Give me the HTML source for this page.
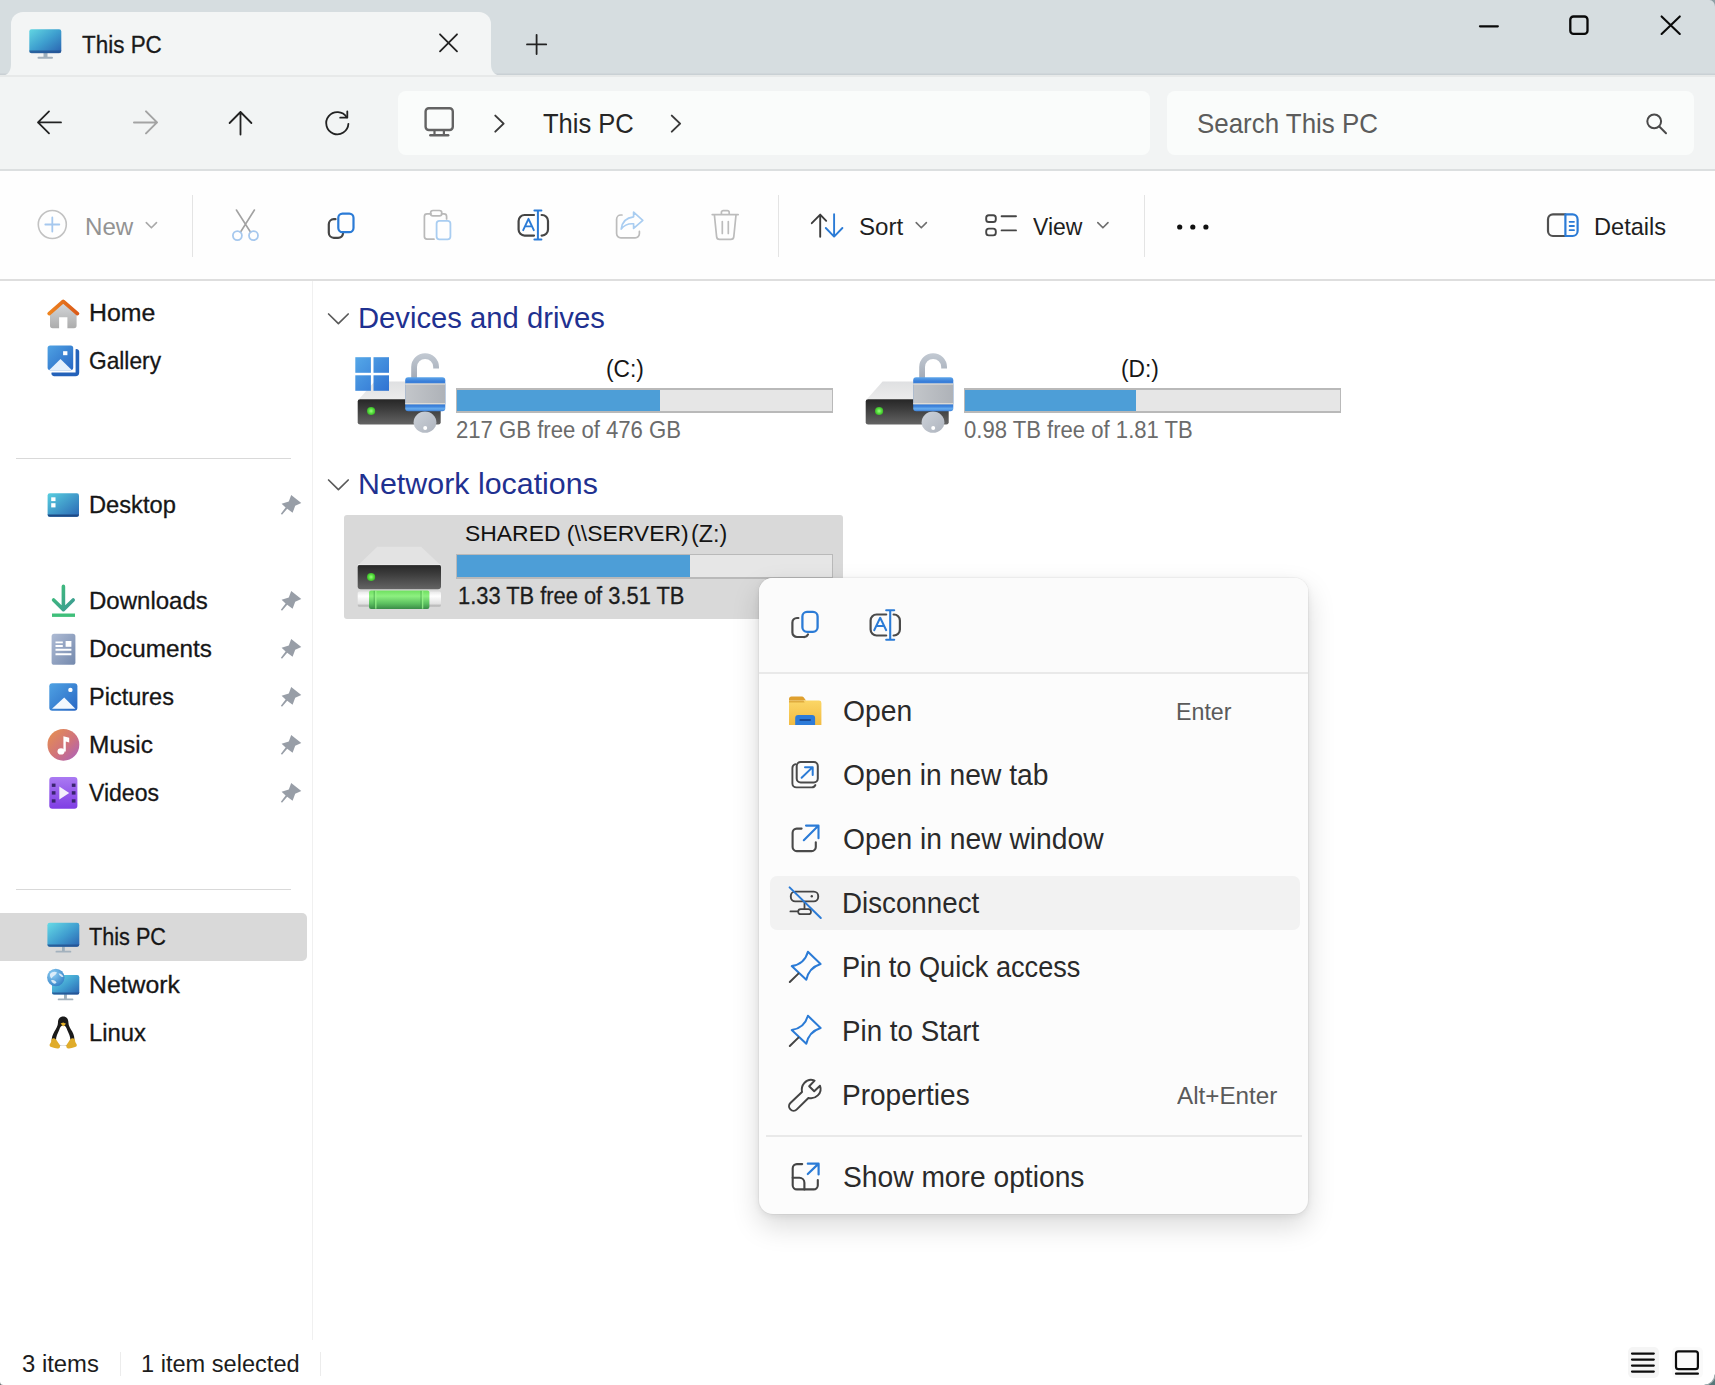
<!DOCTYPE html>
<html lang="en">
<head>
<meta charset="utf-8">
<title>This PC</title>
<style>
html,body{margin:0;padding:0}
body{width:1715px;height:1385px;overflow:hidden;position:relative;background:#fff;font-family:"Liberation Sans",sans-serif;}
.a{position:absolute}
.t{position:absolute;white-space:nowrap;line-height:1;transform-origin:0 50%;display:block}
svg{position:absolute;overflow:visible}
#titlebar{left:0;top:0;width:1715px;height:75px;background:#d6dde0;box-shadow:inset 0 -1.5px 0 #c9d0d4}
#tab{left:11px;top:12px;width:480px;height:64px;background:#f3f5f5;border-radius:12px 12px 0 0}
#navbar{left:0;top:75px;width:1715px;height:95px;background:#f2f4f4}
#addr{left:398px;top:91px;width:752px;height:64px;background:#fafcfb;border-radius:8px}
#search{left:1167px;top:91px;width:527px;height:64px;background:#fafcfb;border-radius:8px}
#navline{left:0;top:169px;width:1715px;height:2px;background:#dcdfe0}
#toolbar{left:0;top:171px;width:1715px;height:109px;background:#fefefe}
#toolline{left:0;top:279px;width:1715px;height:2px;background:#dedede}
.vsep{width:1px;background:#e4e4e4;top:195px;height:62px}
#sideline{left:312px;top:281px;width:1.4px;height:1059px;background:#f0f0f0}
.hsep{left:16px;width:275px;height:1px;background:#d9d9d9}
#selnav{left:0;top:913px;width:307px;height:48px;background:#d9d9d9;border-radius:0 5px 5px 0}
#seltile{left:344px;top:515px;width:499px;height:104px;background:#d9d9d9;border-radius:3px}
.bar{box-sizing:border-box;height:24.8px;width:377.6px;padding:1.6px;background:#b9b9b9}
.bar b{display:block;height:100%;background:#e6e6e6}
.bar i{display:block;height:100%;background:#4d9ed7}
#menu{left:759px;top:577.5px;width:549px;height:636px;background:#fcfcfc;border-radius:14px;box-shadow:0 12px 28px rgba(0,0,0,.15),0 2px 7px rgba(0,0,0,.07),0 0 0 1px rgba(0,0,0,.035)}
#menutop{left:759px;top:577.5px;width:549px;height:94px;background:#fbfbfb;border-radius:14px 14px 0 0;border-bottom:2px solid #e9e9e9}
#mhover{left:770px;top:875.5px;width:530px;height:54.5px;background:#f2f2f2;border-radius:7px}
#msep{left:766px;top:1135.3px;width:536px;height:1.6px;background:#e9e9e9}
.sbtn{top:1347px;width:31px;height:31px;background:#f5f5f5;border-radius:5px}
</style>
</head>
<body>
<!-- ===== title bar ===== -->
<div class="a" id="titlebar"></div>
<div class="a" id="tab"></div>
<svg style="left:0;top:64px" width="510" height="12" viewBox="0 0 510 12"><path d="M0 12H11V0Q11 12 0 12Z M491 0Q491 12 503 12H491Z" fill="#f3f5f5"/></svg>
<span class="t" style="left:82.20px;top:32.54px;font-size:24.6px;color:#1a1a1a;-webkit-text-stroke:.3px;transform:scaleX(0.9125)">This PC</span>
<!-- ===== nav bar ===== -->
<div class="a" id="navbar"></div>
<div class="a" id="addr"></div>
<div class="a" id="search"></div>
<div class="a" id="navline"></div>
<div class="a" style="left:0;top:75px;width:1715px;height:1.5px;background:rgba(0,0,0,.045)"></div>
<span class="t" style="left:543.20px;top:109.66px;font-size:28.1px;color:#262626;transform:scaleX(0.9090)">This PC</span>
<span class="t" style="left:1196.98px;top:109.57px;font-size:28.1px;color:#5c5c5c;transform:scaleX(0.9226)">Search This PC</span>
<!-- ===== title/nav icons ===== -->
<svg style="left:0;top:0" width="1715" height="175" viewBox="0 0 1715 175">
<defs>
<linearGradient id="gpc" x1="0" y1="0" x2="1" y2="1"><stop offset="0" stop-color="#62d6e2"/><stop offset=".5" stop-color="#3e9fcf"/><stop offset="1" stop-color="#2a62b0"/></linearGradient>
</defs>
<!-- tab pc icon -->
<rect x="43.5" y="52" width="4" height="5.5" fill="#9fb0bd"/>
<rect x="37.5" y="56.8" width="15.5" height="2" rx="1" fill="#a3b1bd"/>
<rect x="29.3" y="29.3" width="32" height="23.6" rx="2.2" fill="url(#gpc)"/>
<path d="M29.3 50.6h32v.4a2.2 2.2 0 0 1-2.2 2.2H31.5a2.2 2.2 0 0 1-2.2-2.2z" fill="#23508f" opacity=".75"/>
<g fill="none" stroke="#222" stroke-width="1.8" stroke-linecap="round" stroke-linejoin="round">
<!-- tab close, plus -->
<path d="M440 34.3 457 51.3M457 34.3 440 51.3"/>
<path d="M536.6 34.8V54M527 44.4H546.2"/>
<!-- window controls -->
<g stroke="#0a0a0a" stroke-width="2.3"><path d="M1480 26.300H1497.800"/>
<rect x="1570.300" y="16.500" width="17.200" height="17.400" rx="3.200"/>
<path d="M1661.600 16.400 1679.800 34 M1679.800 16.400 1661.600 34" stroke-width="2.100"/></g>
<!-- back / up -->
<path d="M38 122.4H61M49 111.4 38 122.4 49 133.4"/>
<path d="M240.5 112V134.6M229.6 123 240.5 112 251.4 123"/>
<!-- refresh -->
<path d="M348.4 123.8A11.1 11.1 0 1 1 346.7 117.3"/>
<path d="M340.2 117.7H347.3V111.4"/>
</g>
<!-- forward disabled -->
<path d="M134 122.4H157M146 111.4 157 122.4 146 133.4" fill="none" stroke="#a3a3a3" stroke-width="2" stroke-linecap="round" stroke-linejoin="round"/>
<!-- address monitor -->
<g fill="none" stroke="#636363" stroke-width="2.4" stroke-linejoin="round">
<rect x="425.6" y="108.2" width="27.2" height="21.8" rx="3.2"/>
<path d="M434.5 130.5V134.5M443.9 130.5V134.5" stroke-width="2.2"/>
<path d="M430.3 135.3H448.2" stroke-linecap="round"/>
</g>
<!-- chevrons -->
<g fill="none" stroke="#3a3a3a" stroke-width="2" stroke-linecap="round" stroke-linejoin="round">
<path d="M495.3 115.6 503.6 123.6 495.3 131.6"/>
<path d="M671.8 115.6 680.1 123.6 671.8 131.6"/>
</g>
<!-- search -->
<g fill="none" stroke="#4a4a4a" stroke-width="2" stroke-linecap="round">
<circle cx="1654.2" cy="121.3" r="6.9"/>
<path d="M1659.3 126.5 1666 133.2"/>
</g>
</svg>
<!-- ===== toolbar ===== -->
<div class="a" id="toolbar"></div>
<div class="a" id="toolline"></div>
<div class="a vsep" style="left:192px"></div>
<div class="a vsep" style="left:778px"></div>
<div class="a vsep" style="left:1144px"></div>
<span class="t" style="left:84.92px;top:214.64px;font-size:24.4px;color:#939393;transform:scaleX(0.9890)">New</span>
<span class="t" style="left:858.97px;top:214.64px;font-size:24.4px;color:#1f1f1f;transform:scaleX(0.9889)">Sort</span>
<span class="t" style="left:1033.00px;top:214.64px;font-size:24.4px;color:#1f1f1f;transform:scaleX(0.9421)">View</span>
<span class="t" style="left:1594.29px;top:214.64px;font-size:24.4px;color:#1f1f1f;transform:scaleX(0.9675)">Details</span>
<!-- ===== toolbar icons ===== -->
<svg style="left:0;top:0" width="1715" height="285" viewBox="0 0 1715 285">
<g fill="none" stroke-linecap="round" stroke-linejoin="round">
<!-- new -->
<circle cx="52.3" cy="224.5" r="14" stroke="#c2c2c2" stroke-width="1.6"/>
<path d="M52.3 217.5V231.5M45.3 224.5H59.3" stroke="#a6c8ee" stroke-width="1.8"/>
<path d="M146.3 222.6 151.4 227.8 156.5 222.6" stroke="#a9a9a9" stroke-width="1.6"/>
<!-- cut -->
<path d="M236.4 210 250.6 232.3M254.4 210 240.4 232.3" stroke="#a2a2a2" stroke-width="1.6"/>
<circle cx="237.4" cy="235.6" r="4.5" stroke="#a6c8ee" stroke-width="1.8"/>
<circle cx="253.5" cy="235.6" r="4.5" stroke="#a6c8ee" stroke-width="1.8"/>
<!-- copy -->
<path d="M335.5 219.2H333.8A5 5 0 0 0 328.8 224.2V232.8A5 5 0 0 0 333.8 237.8H338A5 5 0 0 0 343 233.6" stroke="#454545" stroke-width="2.2"/>
<rect x="338.3" y="213.6" width="15.2" height="18.6" rx="4.2" stroke="#2b7bd6" stroke-width="2.2"/>
<!-- paste -->
<path d="M431 213.8H427A2.6 2.6 0 0 0 424.4 216.4V236.6A2.6 2.6 0 0 0 427 239.2H434" stroke="#b9b9b9" stroke-width="1.7"/>
<path d="M441.5 213.8H444A2.6 2.6 0 0 1 446.6 216.4V219" stroke="#b9b9b9" stroke-width="1.7"/>
<rect x="430.6" y="210.5" width="11.2" height="5.4" rx="2.4" stroke="#b9b9b9" stroke-width="1.7"/>
<rect x="436.6" y="220.8" width="13.8" height="18.6" rx="2.8" stroke="#a9cdf1" stroke-width="1.8"/>
<!-- rename -->
<path d="M534 215H524.6A6 6 0 0 0 518.6 221V229.6A6 6 0 0 0 524.6 235.6H534M541.6 215H542A6 6 0 0 1 548 221V229.6A6 6 0 0 1 542 235.6H541.6" stroke="#454545" stroke-width="2.2"/>
<path d="M537.9 210.6V239.4M534.4 210.4H541.4M534.4 239.6H541.4" stroke="#2b7bd6" stroke-width="2"/>
<path d="M523.2 230.2 528.5 218.8 533.8 230.2M525.2 226.4H531.8" stroke="#2b7bd6" stroke-width="1.9"/>
<!-- share -->
<path d="M622 215H620.8A4.2 4.2 0 0 0 616.6 219.2V233.6A4.2 4.2 0 0 0 620.8 237.8H635.2A4.2 4.2 0 0 0 639.4 233.6V231.4" stroke="#bcbcbc" stroke-width="1.7"/>
<path d="M633.6 212.2 642.8 220.4 633.6 228.4V223.8C627.8 223.4 624 225.2 621.2 229C622 222.4 626 217.6 633.6 216.8Z" stroke="#a9cdf1" stroke-width="1.7"/>
<!-- delete -->
<path d="M712.2 214.6H738.2M721.4 214.2V212.4A1.8 1.8 0 0 1 723.2 210.6H727.4A1.8 1.8 0 0 1 729.2 212.4V214.2M714.4 215 716.6 236.6A3 3 0 0 0 719.6 239.4H730.8A3 3 0 0 0 733.8 236.6L736 215M722.3 221.6V233.4M728.3 221.6V233.4" stroke="#bcbcbc" stroke-width="1.7"/>
<!-- sort -->
<path d="M820.2 214.6V236.8M811.8 223.2 820.2 214.6 826.2 220.8" stroke="#3c3c3c" stroke-width="1.9"/>
<path d="M834.1 214.2V236.4M825.8 228 834.1 236.6 842.4 228" stroke="#2b7bd6" stroke-width="1.9"/>
<path d="M916.2 222.6 921.3 227.8 926.4 222.6" stroke="#6e6e6e" stroke-width="1.6"/>
<!-- view -->
<rect x="986.2" y="215.2" width="9.6" height="6.8" rx="2.6" stroke="#454545" stroke-width="1.9"/>
<rect x="986.2" y="228.6" width="9.6" height="6.8" rx="2.6" stroke="#454545" stroke-width="1.9"/>
<path d="M1001.6 216.2H1016M1001.6 230.4H1016" stroke="#454545" stroke-width="1.9"/>
<path d="M1097.8 222.6 1102.9 227.8 1108 222.6" stroke="#6e6e6e" stroke-width="1.6"/>
<!-- details -->
<path d="M1565.4 214.4H1553A5 5 0 0 0 1548 219.4V231A5 5 0 0 0 1553 236H1565.4" stroke="#505050" stroke-width="2.2"/>
<path d="M1565.4 214.4H1572.6A5 5 0 0 1 1577.6 219.4V231A5 5 0 0 1 1572.6 236H1565.4Z" stroke="#2b7bd6" stroke-width="2.2"/>
<path d="M1569.6 221.8H1574M1569.6 226H1574M1569.6 230.2H1574" stroke="#2b7bd6" stroke-width="1.8"/>
</g>
<!-- more dots -->
<g fill="#111"><circle cx="1179.7" cy="227" r="2.6"/><circle cx="1192.8" cy="227" r="2.6"/><circle cx="1205.9" cy="227" r="2.6"/></g>
</svg>
<!-- ===== sidebar ===== -->
<div class="a" id="sideline"></div>
<div class="a hsep" style="top:458px"></div>
<div class="a hsep" style="top:889px"></div>
<div class="a" id="selnav"></div>
<span class="t" style="left:89.11px;top:300.87px;font-size:24.4px;color:#161616;-webkit-text-stroke:.3px;transform:scaleX(1.0192)">Home</span>
<span class="t" style="left:88.99px;top:348.87px;font-size:24.4px;color:#161616;-webkit-text-stroke:.3px;transform:scaleX(0.9320)">Gallery</span>
<span class="t" style="left:89.13px;top:492.87px;font-size:24.4px;color:#161616;-webkit-text-stroke:.3px;transform:scaleX(0.9708)">Desktop</span>
<span class="t" style="left:89.15px;top:588.87px;font-size:24.4px;color:#161616;-webkit-text-stroke:.3px;transform:scaleX(0.9849)">Downloads</span>
<span class="t" style="left:89.15px;top:636.87px;font-size:24.4px;color:#161616;-webkit-text-stroke:.3px;transform:scaleX(0.9959)">Documents</span>
<span class="t" style="left:89.13px;top:684.87px;font-size:24.4px;color:#161616;-webkit-text-stroke:.3px;transform:scaleX(0.9633)">Pictures</span>
<span class="t" style="left:89.10px;top:732.87px;font-size:24.4px;color:#161616;-webkit-text-stroke:.3px;transform:scaleX(1.0031)">Music</span>
<span class="t" style="left:88.99px;top:780.87px;font-size:24.4px;color:#161616;-webkit-text-stroke:.3px;transform:scaleX(0.9442)">Videos</span>
<span class="t" style="left:89.00px;top:924.87px;font-size:24.4px;color:#161616;-webkit-text-stroke:.3px;transform:scaleX(0.8877)">This PC</span>
<span class="t" style="left:89.14px;top:972.87px;font-size:24.4px;color:#161616;-webkit-text-stroke:.3px;transform:scaleX(1.0156)">Network</span>
<span class="t" style="left:89.12px;top:1020.87px;font-size:24.4px;color:#161616;-webkit-text-stroke:.3px;transform:scaleX(0.9754)">Linux</span>
<!-- ===== sidebar icons ===== -->
<svg style="left:0;top:0" width="320" height="1100" viewBox="0 0 320 1100">
<defs>
<linearGradient id="gRoof" x1="0" y1="0" x2="1" y2="0"><stop offset="0" stop-color="#ee8420"/><stop offset="1" stop-color="#da5a18"/></linearGradient>
<linearGradient id="gHouse" x1="0" y1="0" x2="0" y2="1"><stop offset="0" stop-color="#d6d9dc"/><stop offset="1" stop-color="#acacac"/></linearGradient>
<linearGradient id="gBlue" x1="0" y1="0" x2="1" y2="1"><stop offset="0" stop-color="#4fa2e3"/><stop offset="1" stop-color="#2867c4"/></linearGradient>
<linearGradient id="gDesk" x1="0" y1="0" x2="1" y2="1"><stop offset="0" stop-color="#58cfe0"/><stop offset="1" stop-color="#2a66b4"/></linearGradient>
<linearGradient id="gDown" x1="0" y1="0" x2="1" y2="1"><stop offset="0" stop-color="#3fc078"/><stop offset="1" stop-color="#3c9a94"/></linearGradient>
<linearGradient id="gDoc" x1="0" y1="0" x2="1" y2="1"><stop offset="0" stop-color="#aebbd4"/><stop offset="1" stop-color="#7489ad"/></linearGradient>
<linearGradient id="gMus" x1="0" y1="0" x2="1" y2="1"><stop offset="0" stop-color="#e8924c"/><stop offset=".55" stop-color="#d0737c"/><stop offset="1" stop-color="#a95fc0"/></linearGradient>
<linearGradient id="gVid" x1="0" y1="0" x2="0" y2="1"><stop offset="0" stop-color="#aa7af2"/><stop offset="1" stop-color="#7f3de4"/></linearGradient>
<linearGradient id="gMon" x1="0" y1="0" x2="1" y2="1"><stop offset="0" stop-color="#66dbe6"/><stop offset=".55" stop-color="#3f9ccf"/><stop offset="1" stop-color="#2a62b0"/></linearGradient>
<radialGradient id="gGlobe" cx=".35" cy=".3" r=".8"><stop offset="0" stop-color="#8fd0f4"/><stop offset="1" stop-color="#2f7cc4"/></radialGradient>
</defs>
<!-- home -->
<path d="M50 313 63.2 302 76.6 313V325.6A2.6 2.6 0 0 1 74 328.2H67.4V317.2H59.1V328.2H52.6A2.6 2.6 0 0 1 50 325.6Z" fill="url(#gHouse)"/>
<path d="M49.2 313.6 63.2 301.4 77.4 313.6" fill="none" stroke="url(#gRoof)" stroke-width="3.8" stroke-linecap="round" stroke-linejoin="round"/>
<!-- gallery -->
<path d="M75.6 349.2A2.6 2.6 0 0 1 79.2 351.6V372.4A3.8 3.8 0 0 1 75.4 376.2H54A2.6 2.6 0 0 1 51.6 372.6H75.6Z" fill="#2462ba"/>
<rect x="47.6" y="345.4" width="25.6" height="24.8" rx="2.6" fill="url(#gBlue)"/>
<path d="M49 370.2 60.5 359 72 370.2Z" fill="#e4f0fc"/>
<rect x="63.1" y="351.2" width="4.3" height="4" fill="#fff"/>
<!-- desktop -->
<rect x="47.6" y="493.3" width="31.4" height="23.4" rx="2.2" fill="url(#gDesk)"/>
<path d="M47.6 514.4H79V514.6A2.2 2.2 0 0 1 76.8 516.8H49.8A2.2 2.2 0 0 1 47.6 514.6Z" fill="#1d4a86"/>
<rect x="51.2" y="497.3" width="4.3" height="3.8" fill="#fff"/><rect x="51.2" y="503.2" width="4.3" height="4.2" fill="#fff"/>
<!-- downloads -->
<path d="M63.4 586.4V609M53.6 600 63.4 609.6 73.2 600" fill="none" stroke="url(#gDown)" stroke-width="3.6" stroke-linecap="round" stroke-linejoin="round"/>
<path d="M52 615.2H75" stroke="#3fbf7a" stroke-width="3.4" stroke-linecap="butt"/>
<!-- documents -->
<rect x="51.6" y="633.8" width="23.8" height="31" rx="2.6" fill="url(#gDoc)"/>
<path d="M55.5 642.4H62.8M55.5 646H62.8M55.5 649.8H71.4M55.5 654.2H71.4" stroke="#fff" stroke-width="1.9"/>
<rect x="65.6" y="641" width="5.8" height="5.8" fill="#fff"/>
<!-- pictures -->
<rect x="49.3" y="683.2" width="28.1" height="27.6" rx="3" fill="url(#gBlue)"/>
<path d="M52 708.8 64.2 697.6 75.4 708.8Z" fill="#f2f8fe"/>
<circle cx="70.4" cy="689.9" r="2.2" fill="#fff"/>
<!-- music -->
<circle cx="63.4" cy="744.8" r="15.9" fill="url(#gMus)"/>
<ellipse cx="61" cy="751.4" rx="3.5" ry="3.1" fill="#fff"/>
<path d="M63.4 751.6V736.2L69.2 737.8V742.6L65.8 741.6V751.6Z" fill="#fff"/>
<!-- videos -->
<rect x="49.3" y="777" width="28.1" height="31.7" rx="3" fill="url(#gVid)"/>
<g fill="#3a2470"><rect x="51.8" y="783.6" width="3.7" height="3.3"/><rect x="51.8" y="791.2" width="3.7" height="3.4"/><rect x="51.8" y="799.3" width="3.7" height="3.3"/><rect x="71.8" y="783.6" width="3.7" height="3.3"/><rect x="71.8" y="791.2" width="3.7" height="3.4"/><rect x="71.8" y="799.3" width="3.7" height="3.3"/></g>
<path d="M59.3 786.6V799.4L69.2 793Z" fill="#f4f0fb"/>
<!-- this pc -->
<rect x="62" y="946" width="2.8" height="5.4" fill="#9fb0bd"/>
<rect x="55.5" y="950.8" width="15.8" height="1.8" rx=".9" fill="#a3b1bd"/>
<rect x="47.4" y="922.8" width="31.9" height="23.9" rx="2.4" fill="url(#gMon)"/>
<path d="M47.4 944.4H79.3V944.5A2.2 2.2 0 0 1 77.1 946.7H49.6A2.2 2.2 0 0 1 47.4 944.5Z" fill="#23508f" opacity=".8"/>
<!-- network -->
<rect x="64" y="994" width="2.9" height="5" fill="#9fb0bd"/>
<rect x="57.7" y="998.5" width="15.7" height="1.8" rx=".9" fill="#a3b1bd"/>
<rect x="52" y="975" width="27.3" height="19.6" rx="2.2" fill="url(#gMon)"/>
<path d="M52 992.6H79.3V992.6A2 2 0 0 1 77.3 994.6H54A2 2 0 0 1 52 992.6Z" fill="#23508f" opacity=".8"/>
<circle cx="55.8" cy="977.5" r="8.7" fill="url(#gGlobe)"/>
<path d="M50 974C52 971.5 55 971 57 972.5 56 975 53 976 51.5 978.5 50.5 978 49.6 976 50 974ZM58.5 973.5C60.5 973 62.5 974.5 63.5 976.5 62 977.5 60 976.5 58.5 973.5ZM51 980.5C53 979.5 55.5 980.5 56.5 982.5 55.5 984.5 53 984 51 980.5Z" fill="#e3f1fb" opacity=".9"/>
<!-- linux tux -->
<path d="M63.2 1016.4C66.6 1016.4 68.4 1019 68.4 1022.4 68.4 1026 70.6 1028.6 72.2 1031.6 74 1035 74.8 1038 74.2 1041.4L70 1045.6H56.4L51.8 1041.4C51.4 1038 52.6 1034.8 54.4 1031.6 56 1028.6 58 1026 58 1022.4 58 1019 59.8 1016.4 63.2 1016.4Z" fill="#1a1a1a"/>
<path d="M63.2 1025.6C65.4 1025.6 66.4 1027.6 67.2 1030 68.6 1033.6 70.6 1036.6 70.4 1040.4 70.2 1043.6 67.6 1045.8 63.2 1045.8 58.8 1045.8 56.2 1043.6 56 1040.4 55.8 1036.6 57.8 1033.6 59.2 1030 60 1027.6 61 1025.6 63.2 1025.6Z" fill="#fff"/>
<path d="M60.6 1023.6 63.2 1022.6 66 1023.8 63.4 1026.4Z" fill="#e6b32c"/>
<path d="M52.6 1038.6C54.6 1037.6 56.2 1039.4 57.4 1041.6 58.6 1043.6 60.6 1045 60 1047 59.4 1048.8 56.8 1048.8 54.6 1048 52.4 1047.2 49.8 1047.2 49.6 1045.2 49.4 1043.6 51 1043 51.2 1041.4 51.4 1040 51.4 1039.200 52.600 1038.600Z" fill="#e0ac2a"/>
<path d="M73.6 1038.6C71.600 1037.600 70 1039.400 68.800 1041.600 67.600 1043.600 65.800 1045 66.400 1047 67 1048.800 69.600 1048.800 71.800 1048 74 1047.200 76.600 1047.200 76.800 1045.200 77 1043.600 75.400 1043 75.200 1041.400 75 1040 74.800 1039.200 73.600 1038.600Z" fill="#e0ac2a"/>
<!-- pins -->
<g fill="#989ea7"><path transform="translate(0 0)" d="M291.2 495 301.3 503 295.2 505.8 292.6 512.8 287.2 508.8 282 514.8 280.9 513.7 285.6 507.4 281.6 503.8 288.8 501.4Z"/><path transform="translate(0 96)" d="M291.2 495 301.3 503 295.2 505.8 292.6 512.8 287.2 508.8 282 514.8 280.9 513.7 285.6 507.4 281.6 503.8 288.8 501.4Z"/><path transform="translate(0 144)" d="M291.2 495 301.3 503 295.2 505.8 292.6 512.8 287.2 508.8 282 514.8 280.9 513.7 285.6 507.4 281.6 503.8 288.8 501.4Z"/><path transform="translate(0 192)" d="M291.2 495 301.3 503 295.2 505.8 292.6 512.8 287.2 508.8 282 514.8 280.9 513.7 285.6 507.4 281.6 503.8 288.8 501.4Z"/><path transform="translate(0 240)" d="M291.2 495 301.3 503 295.2 505.8 292.6 512.8 287.2 508.8 282 514.8 280.9 513.7 285.6 507.4 281.6 503.8 288.8 501.4Z"/><path transform="translate(0 288)" d="M291.2 495 301.3 503 295.2 505.8 292.6 512.8 287.2 508.8 282 514.8 280.9 513.7 285.6 507.4 281.6 503.8 288.8 501.4Z"/></g>
</svg>
<!-- ===== content ===== -->
<span class="t" style="left:358.17px;top:302.61px;font-size:30px;color:#1f3190;transform:scaleX(0.9739)">Devices and drives</span>
<span class="t" style="left:358.18px;top:468.61px;font-size:30px;color:#1f3190;transform:scaleX(1.0130)">Network locations</span>
<span class="t" style="left:605.91px;top:357.07px;font-size:24.4px;color:#161616;transform:scaleX(0.9330)">(C:)</span>
<span class="t" style="left:1121.13px;top:357.07px;font-size:24.4px;color:#161616;transform:scaleX(0.9330)">(D:)</span>
<div class="a bar" style="left:455.5px;top:388px"><b><i style="width:202.6px"></i></b></div>
<div class="a bar" style="left:963.5px;top:388px"><b><i style="width:170.6px"></i></b></div>
<span class="t" style="left:456.19px;top:417.67px;font-size:24.4px;color:#6b6b6b;transform:scaleX(0.9069)">217 GB free of 476 GB</span>
<span class="t" style="left:964.19px;top:417.67px;font-size:24.4px;color:#6b6b6b;transform:scaleX(0.9056)">0.98 TB free of 1.81 TB</span>
<div class="a" id="seltile"></div>
<span class="t" style="left:464.59px;top:523.94px;font-size:21.4px;color:#111;transform:scaleX(1.0709)">SHARED (\\SERVER)</span>
<span class="t" style="left:690.61px;top:522.07px;font-size:24.4px;color:#161616;transform:scaleX(0.9566)">(Z:)</span>
<div class="a bar" style="left:455.5px;top:553.8px"><b><i style="width:232.6px"></i></b></div>
<span class="t" style="left:457.99px;top:583.87px;font-size:24.4px;color:#1c1c1c;-webkit-text-stroke:.3px;transform:scaleX(0.8961)">1.33 TB free of 3.51 TB</span>
<!-- ===== content icons ===== -->
<svg style="left:0;top:0" width="1400" height="640" viewBox="0 0 1400 640">
<defs>
<linearGradient id="gTop" x1="0" y1="0" x2="0" y2="1"><stop offset="0" stop-color="#dfe0e2"/><stop offset="1" stop-color="#ececec"/></linearGradient>
<linearGradient id="gFront" x1="0" y1="0" x2="0" y2="1"><stop offset="0" stop-color="#262626"/><stop offset=".35" stop-color="#3a3a3a"/><stop offset="1" stop-color="#646464"/></linearGradient>
<radialGradient id="gLed"><stop offset="0" stop-color="#9aff7e"/><stop offset=".6" stop-color="#55dd3c"/><stop offset="1" stop-color="#3cb52a"/></radialGradient>
<linearGradient id="gWin" gradientUnits="userSpaceOnUse" x1="355" y1="357" x2="389" y2="391"><stop offset="0" stop-color="#55a8e8"/><stop offset="1" stop-color="#2f72d2"/></linearGradient>
<linearGradient id="gKey" x1="0" y1="0" x2="1" y2="1"><stop offset="0" stop-color="#cdd2d9"/><stop offset="1" stop-color="#aeb4be"/></linearGradient>
<linearGradient id="gShk" gradientUnits="userSpaceOnUse" x1="0" y1="353" x2="0" y2="378"><stop offset="0" stop-color="#c3cad3"/><stop offset="1" stop-color="#a3abb7"/></linearGradient>
<linearGradient id="gLockB" x1="0" y1="0" x2="0" y2="1"><stop offset="0" stop-color="#5ea6ea"/><stop offset=".12" stop-color="#3a7fd9"/><stop offset=".85" stop-color="#3a7fd9"/><stop offset=".93" stop-color="#69aeee"/><stop offset="1" stop-color="#3a7fd9"/></linearGradient>
<linearGradient id="gLockG" x1="0" y1="0" x2="1" y2="0"><stop offset="0" stop-color="#c3c6ca"/><stop offset="1" stop-color="#aeb2b8"/></linearGradient>
<linearGradient id="gPipe" x1="0" y1="0" x2="0" y2="1"><stop offset="0" stop-color="#e9e9e9"/><stop offset=".3" stop-color="#ffffff"/><stop offset=".8" stop-color="#e2e2e2"/><stop offset="1" stop-color="#a8a8a8"/></linearGradient>
<linearGradient id="gGreen" x1="0" y1="0" x2="0" y2="1"><stop offset="0" stop-color="#6fe060"/><stop offset=".3" stop-color="#8df080"/><stop offset=".7" stop-color="#5cc060"/><stop offset="1" stop-color="#3a8c48"/></linearGradient>
</defs>
<g transform="translate(0 0)"><path d="M358.6 399.6 374.6 381.6H425L440.6 399.6Z" fill="url(#gTop)"/><rect x="357.7" y="399.2" width="83" height="25.4" rx="2.4" fill="url(#gFront)"/><circle cx="371.1" cy="411" r="4.1" fill="url(#gLed)"/><g fill="url(#gWin)"><rect x="355.3" y="357.2" width="15.6" height="15.6"/><rect x="373.5" y="357.2" width="15.5" height="15.6"/><rect x="355.3" y="375.3" width="15.6" height="15.5"/><rect x="373.5" y="375.3" width="15.5" height="15.5"/></g><ellipse cx="425" cy="422.2" rx="11.4" ry="10.6" fill="url(#gKey)"/><circle cx="425.2" cy="428" r="2" fill="#fff"/><path d="M414.1 378V367.1A11 11 0 0 1 436.1 367.1V368.4" fill="none" stroke="url(#gShk)" stroke-width="5.8"/><rect x="405.2" y="377.2" width="40.1" height="34" rx="3" fill="url(#gLockB)"/><rect x="405.2" y="383.6" width="40.1" height="20.6" fill="url(#gLockG)"/><path d="M405.2 384H445.3M405.2 403.8H445.3" stroke="#ece6dc" stroke-width="1.1"/></g>
<g transform="translate(508 0)"><path d="M358.6 399.6 374.6 381.6H425L440.6 399.6Z" fill="url(#gTop)"/><rect x="357.7" y="399.2" width="83" height="25.4" rx="2.4" fill="url(#gFront)"/><circle cx="371.1" cy="411" r="4.1" fill="url(#gLed)"/><ellipse cx="425" cy="422.2" rx="11.4" ry="10.6" fill="url(#gKey)"/><circle cx="425.2" cy="428" r="2" fill="#fff"/><path d="M414.1 378V367.1A11 11 0 0 1 436.1 367.1V368.4" fill="none" stroke="url(#gShk)" stroke-width="5.8"/><rect x="405.2" y="377.2" width="40.1" height="34" rx="3" fill="url(#gLockB)"/><rect x="405.2" y="383.6" width="40.1" height="20.6" fill="url(#gLockG)"/><path d="M405.2 384H445.3M405.2 403.8H445.3" stroke="#ece6dc" stroke-width="1.1"/></g>
<!-- network drive -->
<path d="M358.7 564.4 377.2 546.8H421.1L440 564.4Z" fill="#e3e3e3"/>
<rect x="357.7" y="564.4" width="83.3" height="24.8" rx="3" fill="url(#gFront)"/>
<path d="M358 564.6H440.6" stroke="#f4f4f4" stroke-width="1"/>
<circle cx="371.1" cy="577" r="4.1" fill="url(#gLed)"/>
<rect x="357.7" y="591.6" width="83.3" height="15" rx="1.5" fill="url(#gPipe)"/>
<rect x="369" y="590.6" width="60.4" height="18.4" rx="2" fill="url(#gGreen)"/>
<path d="M375.8 590.8V608.8M422.6 590.8V608.8" stroke="#9af58c" stroke-width="1.4" opacity=".8"/>
<path d="M374.2 590.8V608.8M421 590.8V608.8" stroke="#3f9a48" stroke-width="1" opacity=".6"/>
<!-- group chevrons -->
<g fill="none" stroke="#5a5a5a" stroke-width="1.7" stroke-linecap="round" stroke-linejoin="round">
<path d="M328.6 314 338.4 323.6 348.2 314"/>
<path d="M328.6 480 338.4 489.6 348.2 480"/>
</g>
</svg>
<!-- ===== status bar ===== -->
<span class="t" style="left:22.38px;top:1351.58px;font-size:24.4px;color:#1c1c1c;transform:scaleX(0.9772)">3 items</span>
<span class="t" style="left:140.96px;top:1351.58px;font-size:24.4px;color:#1c1c1c;transform:scaleX(0.9672)">1 item selected</span>
<div class="a" style="left:120px;top:1352px;width:1px;height:24px;background:#ececec"></div>
<div class="a" style="left:320px;top:1352px;width:1px;height:24px;background:#ececec"></div>
<div class="a sbtn" style="left:1627.500px"></div>
<div class="a sbtn" style="left:1671.500px;background:#fafafa"></div>
<!-- ===== status icons / corners ===== -->
<svg style="left:0;top:0" width="1715" height="1385" viewBox="0 0 1715 1385" pointer-events="none">
<g fill="none" stroke="#0c0c0c" stroke-width="2.2" stroke-linecap="round" stroke-linejoin="round">
<path d="M1632 1353.600H1653.800M1632 1359.600H1653.800M1632 1365.600H1653.800M1632 1371.600H1653.800"/>
<rect x="1676" y="1351.400" width="21.900" height="17.800" rx="2.400"/>
<path d="M1676 1373.700H1697.900"/>
</g>
<path d="M1715 1374.500A10.500 10.500 0 0 1 1704.500 1385H1715Z" fill="#56787a"/>
<path d="M1715 1374.500A10.500 10.500 0 0 1 1704.500 1385" fill="none" stroke="#9aa9ab" stroke-width="1.200"/>
<path d="M0 1381.500A3.500 3.500 0 0 0 3.500 1385H0Z" fill="#6a7274"/>
<path d="M1709.500 0A5.500 6.500 0 0 1 1715 6.500V0Z" fill="#8e9fa4"/>
</svg>
<!-- ===== context menu ===== -->
<div class="a" id="menu"></div>
<div class="a" id="menutop"></div>
<div class="a" id="mhover"></div>
<div class="a" id="msep"></div>
<span class="t" style="left:842.56px;top:696.52px;font-size:28.6px;color:#2a2a2a;transform:scaleX(0.9878)">Open</span>
<span class="t" style="left:842.59px;top:760.52px;font-size:28.6px;color:#2a2a2a;transform:scaleX(0.9864)">Open in new tab</span>
<span class="t" style="left:842.59px;top:824.52px;font-size:28.6px;color:#2a2a2a;transform:scaleX(0.9877)">Open in new window</span>
<span class="t" style="left:841.57px;top:888.52px;font-size:28.6px;color:#2a2a2a;transform:scaleX(0.9702)">Disconnect</span>
<span class="t" style="left:841.57px;top:952.52px;font-size:28.6px;color:#2a2a2a;transform:scaleX(0.9496)">Pin to Quick access</span>
<span class="t" style="left:841.57px;top:1016.52px;font-size:28.6px;color:#2a2a2a;transform:scaleX(0.9702)">Pin to Start</span>
<span class="t" style="left:841.54px;top:1080.52px;font-size:28.6px;color:#2a2a2a;transform:scaleX(0.9796)">Properties</span>
<span class="t" style="left:842.59px;top:1162.52px;font-size:28.6px;color:#2a2a2a;transform:scaleX(0.9863)">Show more options</span>
<span class="t" style="left:1175.93px;top:699.64px;font-size:24.4px;color:#5a5a5a;transform:scaleX(0.9518)">Enter</span>
<span class="t" style="left:1177.40px;top:1083.64px;font-size:24.4px;color:#5a5a5a;transform:scaleX(0.9939)">Alt+Enter</span>
<!-- ===== menu icons ===== -->
<svg style="left:0;top:0" width="1400" height="1230" viewBox="0 0 1400 1230">
<defs>
<linearGradient id="gFold" x1="0" y1="0" x2="0" y2="1"><stop offset="0" stop-color="#fbd666"/><stop offset="1" stop-color="#f2bb42"/></linearGradient>
</defs>
<g fill="none" stroke-linecap="round" stroke-linejoin="round">
<!-- copy -->
<path d="M798.4 618H797A4.6 4.6 0 0 0 792.4 622.6V632.4A4.6 4.6 0 0 0 797 637H803.4A4.6 4.6 0 0 0 808 634.4" stroke="#4a4a4a" stroke-width="2.2"/>
<rect x="802.4" y="611.9" width="15.2" height="20" rx="4.6" stroke="#2b7bd6" stroke-width="2.3"/>
<!-- rename -->
<path d="M886.2 614.5H876.6A6 6 0 0 0 870.6 620.5V629.5A6 6 0 0 0 876.6 635.5H886.2M893.6 614.5H893.9A6 6 0 0 1 899.9 620.5V629.5A6 6 0 0 1 893.9 635.5H893.6" stroke="#4a4a4a" stroke-width="2.2"/>
<path d="M890.2 610.4V639.6M886.2 610.2H894.2M886.2 639.8H894.2" stroke="#2b7bd6" stroke-width="2.1"/>
<path d="M874.2 630.2 880.2 617.8 886.2 630.2M876.4 626H884" stroke="#2b7bd6" stroke-width="2"/>
<!-- open in new tab -->
<path d="M795.4 764.2A4 4 0 0 0 792.4 768V783.4A4 4 0 0 0 796.4 787.4H811.8A4 4 0 0 0 815.4 785" stroke="#4a4a4a" stroke-width="1.9"/>
<rect x="796.7" y="762.1" width="21.1" height="20.4" rx="4" stroke="#4a4a4a" stroke-width="2"/>
<path d="M801.6 777.8 812.4 767.4M805 767.2H812.7V775" stroke="#2b7bd6" stroke-width="2"/>
<!-- open in new window -->
<path d="M801.6 828.6H796.8A4.2 4.2 0 0 0 792.6 832.800V846.900A4.200 4.200 0 0 0 796.800 851.100H811.600A4.200 4.200 0 0 0 815.800 846.900V842.200" stroke="#4a4a4a" stroke-width="2.1"/>
<path d="M803.800 840.200 818.300 825.800M806 825.600H818.500V838.200" stroke="#2b7bd6" stroke-width="2.100"/>
<!-- disconnect -->
<rect x="790.800" y="891.600" width="27.400" height="9.800" rx="4.400" stroke="#444" stroke-width="1.900"/>
<path d="M804.500 902.300V908.800M790.400 911.400H797.600" stroke="#444" stroke-width="1.800"/>
<rect x="798.200" y="909.200" width="12.800" height="5" rx="2.500" stroke="#444" stroke-width="1.700"/>
<circle cx="811.800" cy="896.200" r="1.200" fill="#444" stroke="none"/>
<path d="M789.600 887.400 820.800 918" stroke="#2b7bd6" stroke-width="2"/>
<!-- pins -->
<path d="M807.9 951.7 820.6 964Q808.800 967.800 806.300 979.800L791.700 966.100Q804.600 964 807.900 951.700Z" stroke="#2b7bd6" stroke-width="2"/>
<path d="M798.400 973.600 789.800 982" stroke="#444" stroke-width="2"/>
<g transform="translate(0 64)"><path d="M807.9 951.7 820.6 964Q808.800 967.800 806.300 979.800L791.700 966.100Q804.600 964 807.900 951.700Z" stroke="#2b7bd6" stroke-width="2"/>
<path d="M798.400 973.600 789.800 982" stroke="#444" stroke-width="2"/></g>
<!-- properties wrench -->
<path d="M814.600 1080.600C811 1079.200 806.800 1080.200 804.200 1083.200C802 1085.800 801.400 1089 802 1092L790.400 1103C788.600 1104.800 788.600 1107.600 790.400 1109.400C792.200 1111.200 795 1111.200 796.800 1109.400L808.400 1098C811.600 1098.800 815.200 1098 817.800 1095.400C820.400 1092.800 821.200 1089 820 1085.800L814.200 1091.200 809.200 1086.200Z" stroke="#444" stroke-width="2"/>
<!-- show more -->
<path d="M802.200 1164.100H796.900A4.200 4.200 0 0 0 792.700 1168.300V1185.200A4.200 4.200 0 0 0 796.900 1189.400H813.600A4.200 4.200 0 0 0 817.800 1185.200V1180" stroke="#444" stroke-width="2.100"/>
<path d="M792.700 1177.800H799.400A5 5 0 0 1 804.400 1182.800V1189.400" stroke="#444" stroke-width="2.100"/>
<path d="M807.800 1174 818.300 1163.900M807.800 1163.700H818.600V1174.400" stroke="#2b7bd6" stroke-width="2.200"/>
</g>
<!-- open folder -->
<path d="M789 699A2.500 2.500 0 0 1 791.500 696.500H801.500C802.500 696.500 803.200 696.800 803.800 697.600L806 700.600H789Z" fill="#dfa02e"/>
<path d="M789 700.600H819A2.400 2.400 0 0 1 821.400 703V725H789Z" fill="url(#gFold)"/>
<path d="M789 700.600H803.500L804.600 702.600H789Z" fill="#c98a22" opacity=".55"/>
<path d="M795.200 725V718A3 3 0 0 1 798.200 715H812.100A3 3 0 0 1 815.100 718V725Z" fill="#2d7bd8"/>
<rect x="799.400" y="719.100" width="11.600" height="1.900" rx=".9" fill="#184a96"/>
</svg>
</body>
</html>
